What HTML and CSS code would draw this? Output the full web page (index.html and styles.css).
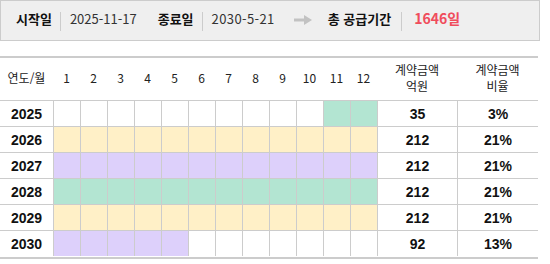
FILE: index.html
```html
<!DOCTYPE html>
<html lang="ko">
<head>
<meta charset="utf-8">
<title>공급기간</title>
<link rel="stylesheet" href="styles.css">
</head>
<body>
<div class="summary">
  <span class="txt lbl first">시작일</span><span class="sep"></span><span class="txt val">2025-11-17</span>
  <span class="txt lbl gap">종료일</span><span class="sep"></span><span class="txt val wide">2030-5-21</span>
  <svg class="arrow" width="18" height="10" viewBox="0 0 18 10"><path d="M0 5H12" stroke="#c2c2c2" stroke-width="3"/><path d="M10 0L18 5L10 10Z" fill="#c2c2c2"/></svg>
  <span class="txt lbl">총 공급기간</span><span class="sep sep-last"></span><span class="txt total">1646일</span>
</div>

<div class="grid">
  <div class="h">연도/월</div>
  <div class="h">1</div><div class="h">2</div><div class="h">3</div><div class="h">4</div><div class="h">5</div><div class="h">6</div>
  <div class="h">7</div><div class="h">8</div><div class="h">9</div><div class="h">10</div><div class="h">11</div><div class="h">12</div>
  <div class="h">계약금액<br>억원</div>
  <div class="h">계약금액<br>비율</div>

  <div class="c yr">2025</div>
  <div class="c m"></div><div class="c m"></div><div class="c m"></div><div class="c m"></div><div class="c m"></div><div class="c m"></div>
  <div class="c m"></div><div class="c m"></div><div class="c m"></div><div class="c m"></div><div class="c m g"></div><div class="c m g"></div>
  <div class="c n">35</div><div class="c n">3%</div>

  <div class="c yr">2026</div>
  <div class="c m y"></div><div class="c m y"></div><div class="c m y"></div><div class="c m y"></div><div class="c m y"></div><div class="c m y"></div>
  <div class="c m y"></div><div class="c m y"></div><div class="c m y"></div><div class="c m y"></div><div class="c m y"></div><div class="c m y"></div>
  <div class="c n">212</div><div class="c n">21%</div>

  <div class="c yr">2027</div>
  <div class="c m p"></div><div class="c m p"></div><div class="c m p"></div><div class="c m p"></div><div class="c m p"></div><div class="c m p"></div>
  <div class="c m p"></div><div class="c m p"></div><div class="c m p"></div><div class="c m p"></div><div class="c m p"></div><div class="c m p"></div>
  <div class="c n">212</div><div class="c n">21%</div>

  <div class="c yr">2028</div>
  <div class="c m g"></div><div class="c m g"></div><div class="c m g"></div><div class="c m g"></div><div class="c m g"></div><div class="c m g"></div>
  <div class="c m g"></div><div class="c m g"></div><div class="c m g"></div><div class="c m g"></div><div class="c m g"></div><div class="c m g"></div>
  <div class="c n">212</div><div class="c n">21%</div>

  <div class="c yr">2029</div>
  <div class="c m y"></div><div class="c m y"></div><div class="c m y"></div><div class="c m y"></div><div class="c m y"></div><div class="c m y"></div>
  <div class="c m y"></div><div class="c m y"></div><div class="c m y"></div><div class="c m y"></div><div class="c m y"></div><div class="c m y"></div>
  <div class="c n">212</div><div class="c n">21%</div>

  <div class="c yr last">2030</div>
  <div class="c m p last"></div><div class="c m p last"></div><div class="c m p last"></div><div class="c m p last"></div><div class="c m p last"></div><div class="c m last"></div>
  <div class="c m last"></div><div class="c m last"></div><div class="c m last"></div><div class="c m last"></div><div class="c m last"></div><div class="c m last"></div>
  <div class="c n last">92</div><div class="c n last">13%</div>
</div>
</body>
</html>
```

FILE: styles.css
```css
html, body {
  margin: 0;
  padding: 0;
  background: #ffffff;
}

body {
  font-family: "Noto Sans CJK KR", "Noto Sans", sans-serif;
  color: #222222;
  width: 550px;
}

.summary {
  box-sizing: border-box;
  width: 540px;
  height: 41px;
  border: 1px solid #cccccc;
  background: #efefef;
  display: flex;
  align-items: center;
  padding-left: 15px;
}

.txt {
  font-size: 13px;
  line-height: 13px;
  margin-bottom: 5px;
  white-space: nowrap;
}

.lbl {
  font-weight: bold;
  color: #111111;
}

.lbl.gap {
  margin-left: 21px;
}

.val {
  color: #333333;
}

.val.wide {
  letter-spacing: 0.4px;
}

.sep {
  width: 1px;
  height: 19px;
  background: #cccccc;
  margin: 1px 9px 0 8px;
}

.sep.sep-last {
  margin-left: 10px;
  margin-right: 10px;
}

.arrow {
  margin: 0 16px 2px 19px;
}

.total {
  font-size: 14px;
  font-weight: bold;
  color: #f04c5c;
  margin-left: 2px;
}

.grid {
  margin-top: 15px;
  width: 538px;
  display: grid;
  grid-template-columns: 53px repeat(12, 27px) 80px 81px;
  grid-auto-rows: 26px;
  grid-template-rows: 43px;
  border-top: 2px solid #cccccc;
  border-bottom: 2px solid #cccccc;
}

.h {
  box-sizing: border-box;
  border-bottom: 1px solid #cccccc;
  display: flex;
  align-items: center;
  justify-content: center;
  text-align: center;
  font-size: 12px;
  line-height: 16px;
  padding-bottom: 2px;
  color: #222222;
}

.c {
  box-sizing: border-box;
  border-bottom: 1px solid #cccccc;
  border-left: 1px solid #cccccc;
  display: flex;
  align-items: center;
  justify-content: center;
  font-family: "Liberation Sans", Arial, sans-serif;
  font-weight: bold;
  font-size: 14px;
  color: #111111;
}

.c.yr {
  border-left: none;
}

.c.last {
  border-bottom: none;
  height: 25px;
}

.y { background: #fff0c7; }
.p { background: #ddd0fb; }
.g { background: #b3e5d2; }
```
